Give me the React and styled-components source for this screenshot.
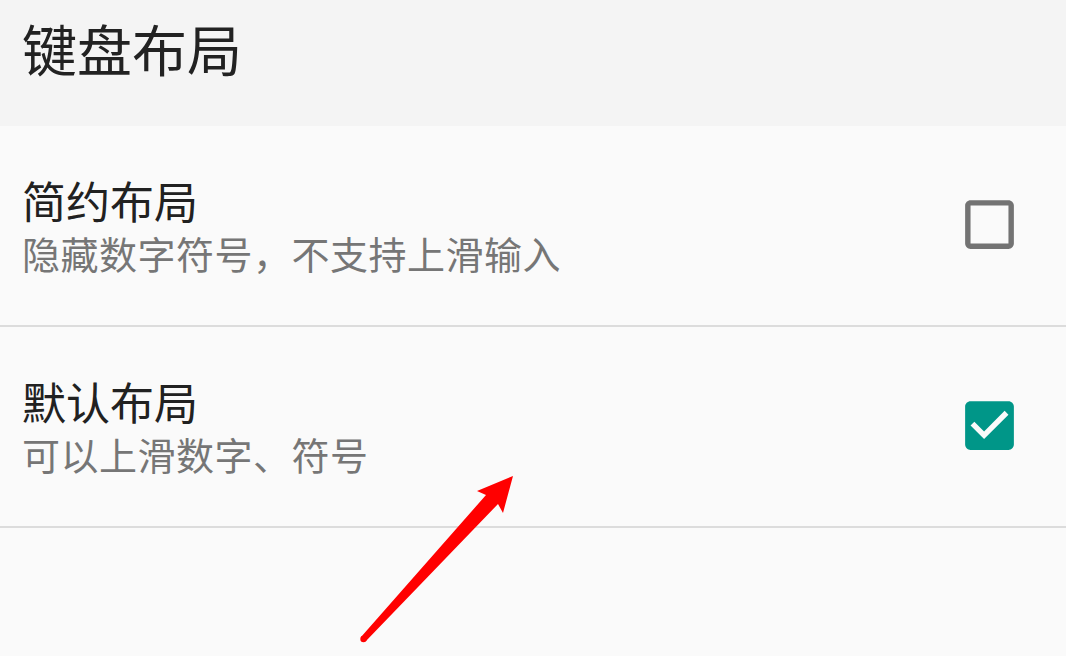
import React from 'react'
import styled, { createGlobalStyle } from 'styled-components'

const GlobalStyle = createGlobalStyle`
  html, body {
    margin: 0;
    padding: 0;
    background: #fafafa;
  }
  body {
    font-family: "Noto Sans CJK SC", "Noto Sans", sans-serif;
  }
`

const Page = styled.div`
  position: relative;
  width: 1066px;
  height: 656px;
  overflow: hidden;
  background: #fafafa;
`

const Header = styled.div`
  height: 126px;
  box-sizing: border-box;
  padding: 14px 0 0 22px;
  background: #f4f4f4;
`

const HeaderTitle = styled.h1`
  margin: 0;
  font-size: 55px;
  line-height: 66px;
  font-weight: 400;
  color: #222;
`

const Row = styled.div`
  display: flex;
  align-items: center;
  justify-content: space-between;
  height: 201px;
  box-sizing: border-box;
  padding: 0 44px 2px 22px;
  border-bottom: 2px solid #dcdcdc;
`

const TextBlock = styled.div`
  display: flex;
  flex-direction: column;
`

const Title = styled.div`
  font-size: 44px;
  line-height: 52px;
  color: #212121;
`

const Summary = styled.div`
  margin-top: 4px;
  font-size: 38px;
  line-height: 46px;
  letter-spacing: 0.5px;
  color: #767676;
`

const Arrow = styled.svg`
  position: absolute;
  left: 0;
  top: 0;
  pointer-events: none;
`

const Checkbox = ({ checked }) => (
  <svg width="65" height="65" viewBox="0 0 24 24">
    {checked ? (
      <path
        fill="#009688"
        d="M19 3H5c-1.11 0-2 .9-2 2v14c0 1.1.89 2 2 2h14c1.11 0 2-.9 2-2V5c0-1.1-.89-2-2-2zm-9 14l-5-5 1.41-1.41L10 14.17l7.59-7.59L19 8l-9 9z"
      />
    ) : (
      <path
        fill="#737373"
        d="M19 5v14H5V5h14m0-2H5c-1.1 0-2 .9-2 2v14c0 1.1.9 2 2 2h14c1.1 0 2-.9 2-2V5c0-1.1-.9-2-2-2z"
      />
    )}
  </svg>
)

const options = [
  { title: '简约布局', summary: '隐藏数字符号，不支持上滑输入', checked: false },
  { title: '默认布局', summary: '可以上滑数字、符号', checked: true },
]

export default function App() {
  return (
    <Page>
      <GlobalStyle />
      <Header>
        <HeaderTitle>键盘布局</HeaderTitle>
      </Header>
      {options.map((o) => (
        <Row key={o.title}>
          <TextBlock>
            <Title>{o.title}</Title>
            <Summary>{o.summary}</Summary>
          </TextBlock>
          <Checkbox checked={o.checked} />
        </Row>
      ))}
      <Arrow width="1066" height="656" viewBox="0 0 1066 656">
        <polygon
          fill="#ff0000"
          points="513,476 477,491 486,495 361,637 366,641 498,504 503,513"
        />
        <circle cx="363.5" cy="639" r="3.2" fill="#ff0000" />
      </Arrow>
    </Page>
  )
}
